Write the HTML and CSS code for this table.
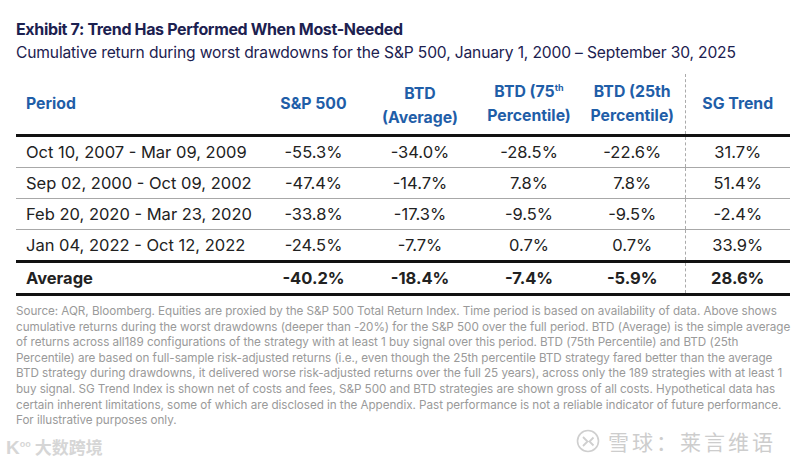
FILE: index.html
```html
<!DOCTYPE html>
<html>
<head>
<meta charset="utf-8">
<link rel="stylesheet" href="styles.css">
</head>
<body>
<div class="page">
  <h1 class="title">Exhibit 7: Trend Has Performed When Most-Needed</h1>
  <p class="subtitle">Cumulative return during worst drawdowns for the S&amp;P 500, January 1, 2000 – September 30, 2025</p>
  <table class="tbl">
    <colgroup>
      <col class="c1"><col class="c2"><col class="c3"><col class="c4"><col class="c5"><col class="c6">
    </colgroup>
    <thead>
      <tr>
        <th class="left">Period</th>
        <th>S&amp;P 500</th>
        <th class="low">BTD<br>(Average)</th>
        <th>BTD (75<sup>th</sup><br>Percentile)</th>
        <th>BTD (25th<br>Percentile)</th>
        <th class="sg">SG Trend</th>
      </tr>
    </thead>
    <tbody>
      <tr><td class="left">Oct 10, 2007 - Mar 09, 2009</td><td>-55.3%</td><td>-34.0%</td><td>-28.5%</td><td>-22.6%</td><td class="sg">31.7%</td></tr>
      <tr><td class="left">Sep 02, 2000 - Oct 09, 2002</td><td>-47.4%</td><td>-14.7%</td><td>7.8%</td><td>7.8%</td><td class="sg">51.4%</td></tr>
      <tr><td class="left">Feb 20, 2020 - Mar 23, 2020</td><td>-33.8%</td><td>-17.3%</td><td>-9.5%</td><td>-9.5%</td><td class="sg">-2.4%</td></tr>
      <tr class="last"><td class="left">Jan 04, 2022 - Oct 12, 2022</td><td>-24.5%</td><td>-7.7%</td><td>0.7%</td><td>0.7%</td><td class="sg">33.9%</td></tr>
      <tr class="avg"><td class="left">Average</td><td>-40.2%</td><td>-18.4%</td><td>-7.4%</td><td>-5.9%</td><td class="sg">28.6%</td></tr>
    </tbody>
  </table>
  <p class="note">Source: AQR, Bloomberg. Equities are proxied by the S&amp;P 500 Total Return Index. Time period is based on availability of data. Above shows cumulative returns during the worst drawdowns (deeper than -20%) for the S&amp;P 500 over the full period. BTD (Average) is the simple average of returns across all189 configurations of the strategy with at least 1 buy signal over this period. BTD (75th Percentile) and BTD (25th Percentile) are based on full-sample risk-adjusted returns (i.e., even though the 25th percentile BTD strategy fared better than the average BTD strategy during drawdowns, it delivered worse risk-adjusted returns over the full 25 years), across only the 189 strategies with at least 1 buy signal. SG Trend Index is shown net of costs and fees, S&amp;P 500 and BTD strategies are shown gross of all costs. Hypothetical data has certain inherent limitations, some of which are disclosed in the Appendix. Past performance is not a reliable indicator of future performance. For illustrative purposes only.</p>
  <div class="marks">
    <span class="wm-left"><span class="k">K<sup>oo</sup></span>大数跨境</span>
    <span class="wm-right"><svg class="xq" viewBox="0 0 24 24" width="24" height="24"><circle cx="12" cy="12" r="10.5" fill="none" stroke="#cfcfcf" stroke-width="1.6"/><path d="M7 8 L11.5 12.5 L7 17 M17.5 8.5 L13.5 12.5 L17.5 16.5" fill="none" stroke="#cfcfcf" stroke-width="1.8"/></svg>雪球：莱言维语</span>
  </div>
</div>
</body>
</html>
```
FILE: styles.css
```css
html, body { margin: 0; padding: 0; background: #fff; }
body { font-family: Inter, "Noto Sans", "Liberation Sans", sans-serif; width: 800px; height: 464px; overflow: hidden; }
.page { padding: 18px 6px 0 16px; }
.title { margin: 0; font-size: 16px; font-weight: 700; color: #1c2150; letter-spacing: -0.35px; line-height: 22px; }
.subtitle { margin: 2px 0 0; font-size: 15.6px; font-weight: 400; color: #1c2150; letter-spacing: -0.15px; line-height: 22px; }
.tbl { margin-top: 10px; border-collapse: collapse; width: 774px; table-layout: fixed; font-size: 16.5px; color: #222; }
.c1 { width: 249px; } .c2 { width: 97px; } .c3 { width: 116px; } .c4 { width: 102px; } .c5 { width: 105px; } .c6 { width: 105px; }
.tbl th { height: 56px; padding: 0; font-weight: 700; color: #1f5ea8; font-size: 15.8px; line-height: 24px; text-align: center; border-bottom: 3px solid #111; vertical-align: middle; }
.tbl th.low { vertical-align: bottom; padding-bottom: 4px; }
.tbl th sup { font-size: 9px; line-height: 0; vertical-align: 6px; }
.tbl .left { text-align: left; padding-left: 10px; }
.tbl td { height: 30px; padding: 0; text-align: center; border-bottom: 1px solid #a8a8a8; line-height: 20px; letter-spacing: 0; }
.tbl tr.last td { border-bottom: 3px solid #111; }
.tbl tr.avg td { font-weight: 700; border-bottom: 3px solid #111; height: 30px; }
.tbl .sg { border-left: 1.5px dashed #aaa; }
.note { margin: 8px 0 0; font-size: 11.7px; line-height: 15.6px; color: #9a9a9a; width: 778px; letter-spacing: -0.05px; }
.marks { display: flex; justify-content: space-between; align-items: flex-start; margin-top: -1px; padding-right: 18px; }
.wm-left { font-size: 17px; line-height: 20px; font-family: "Noto Sans CJK SC", sans-serif; padding-top: 6px; margin-left: -10px; color: #d6d6d6; font-weight: 700; }
.wm-left .k { font-family: "Liberation Sans", sans-serif; font-size: 19px; margin-right: 4px; }
.wm-left sup { font-size: 9px; }
.wm-right { display: flex; align-items: center; gap: 8px; font-size: 21px; line-height: 26px; letter-spacing: 3px; font-family: "Noto Sans CJK SC", sans-serif; color: #cdcdcd; }
```
